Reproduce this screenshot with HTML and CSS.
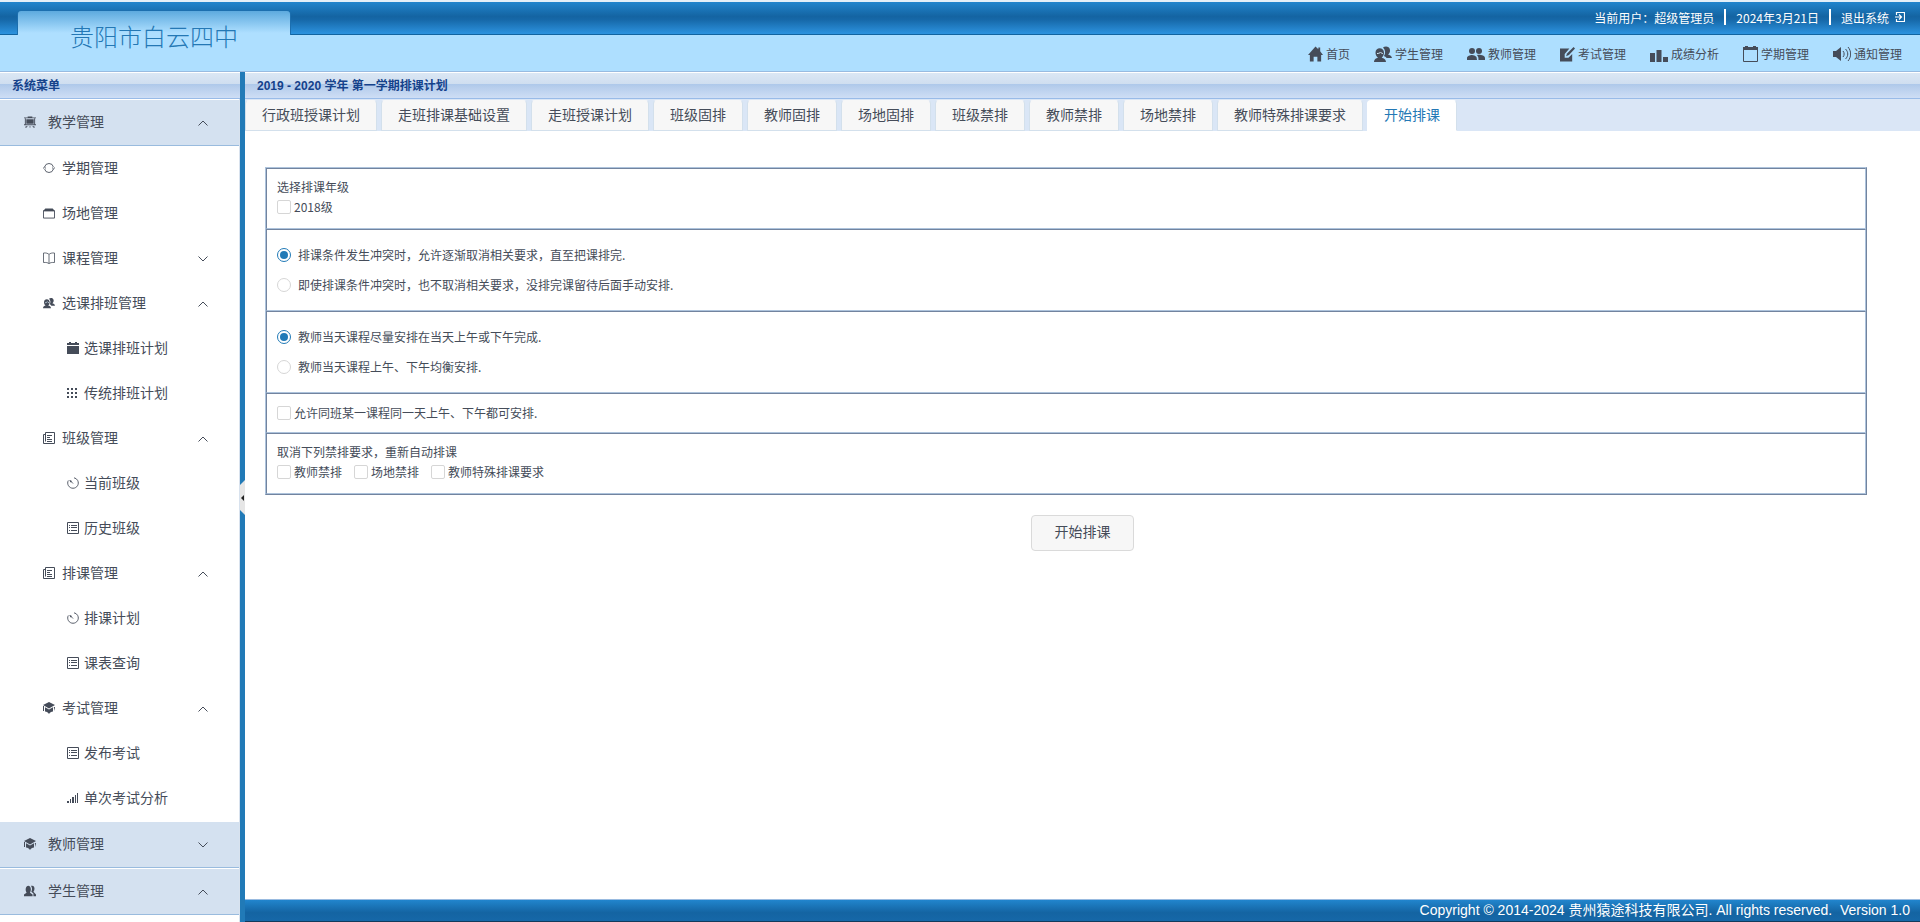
FILE: index.html
```html
<!DOCTYPE html>
<html lang="zh-CN">
<head>
<meta charset="utf-8">
<title>贵阳市白云四中</title>
<link rel="stylesheet" href="styles.css">
</head>
<body>
<svg class="sprite" aria-hidden="true">
  <symbol id="board" viewBox="0 0 13 12"><path d="M0 1h4V0h5v1h4v1H0zM2.500 3h8v5h-8zM0 8.500h13v1H0zM2 10.500h2L3 12H1zM6 10.500h1V12H6zM9 10.500h2l1 1.500h-2z"/><path d="M1.500 2v7M11.500 2v7" fill="none" stroke="currentColor"/></symbol>
  <symbol id="cycle" viewBox="0 0 14 14"><g fill="none" stroke="currentColor"><path d="M1.800 6a5.300 5.300 0 0 1 10.400 0M12.200 8a5.300 5.300 0 0 1-10.400 0M0 7.500l1.800-1.500 1.700 1.500M10.500 6.500L12.200 8 14 6.500"/></g></symbol>
  <symbol id="site" viewBox="0 0 13 12"><path d="M2.500 1h8L13 4H0z"/><path d="M.5 3.500h12v8H.5z" fill="none" stroke="currentColor"/></symbol>
  <symbol id="book" viewBox="0 0 12 12"><path d="M6 2.500C5 1.200 3 .8.500 1v9.500c2.500-.2 4.500.1 5.500 1.200 1-1.100 3-1.400 5.500-1.200V1C9 .8 7 1.200 6 2.500zM6 2.500v9" fill="none" stroke="currentColor" stroke-width=".8"/></symbol>
  <symbol id="friends" viewBox="0 0 18 16"><path d="M9 1.500C11 0 15.500 0 16 4c.2 2-.8 3.500-2 4.500 1.500.8 3.500 1 4 3.500h-5.500c-.5-1-1.500-1.500-2.500-2 1.800-2.500 1.500-6-1-8.500z"/><path d="M0 16c.2-3 2-3.500 4-4.200C2.500 10.500 1.500 9 1.500 6.800 1.500 4 3.300 2.300 5.700 2.300S10 4 10 6.800c0 2.200-1 3.700-2.300 5 2 .7 4.100 1.200 4.300 4.200z"/><path class="cut" d="M3 7.500c2 0 3-.5 3.500-1.500C7 7 8 7.500 9 7.500"/></symbol>
  <symbol id="date" viewBox="0 0 12 12"><path d="M0 1h2V0h2v1h4V0h2v1h2v2H0zM0 4h12v8H0z"/></symbol>
  <symbol id="grid" viewBox="0 0 12 12"><path d="M0 1h2v2H0zM4 1h2v2H4zM8 1h2v2H8zM0 5h2v2H0zM4 5h2v2H4zM8 5h2v2H8zM0 9h2v2H0zM4 9h2v2H4zM8 9h2v2H8z"/></symbol>
  <symbol id="sheet" viewBox="0 0 12 12"><path d="M2.500.5h9M11.500.5v11M.5 11.500h11M.5 2.500v9M2.500.5v9M.5 2.500h2M4 3.500h5M4 5.500h3M4 7.500h5M4 9.500h5" fill="none" stroke="currentColor"/></symbol>
  <symbol id="list" viewBox="0 0 12 12"><path d="M.5.5h11v11H.5zM2 3.500h1M4 3.500h6M2 5.500h1M4 5.500h6M2 8.500h1M4 8.500h6" fill="none" stroke="currentColor"/></symbol>
  <symbol id="gauge" viewBox="0 0 12 12"><path d="M1.300 3.500A5.300 5.300 0 1 0 10.700 3.500M10.700 3.500A5.300 5.300 0 0 0 7 .8M3 3.500l3 3" fill="none" stroke="currentColor" stroke-width=".9"/><path d="M2.500 3l2.500 1-1.500 1.500z"/></symbol>
  <symbol id="cap" viewBox="0 0 12 12"><path d="M0 3l6-3 6 3-6 3.500zM2 5.200L6 7.500l4-2.300V9.500C8.300 9.500 6.800 10.500 6 12c-.8-1.500-2.300-2.500-4-2.500zM0 4h1v5H0zM10.800 5H12l-.6 4z"/></symbol>
  <symbol id="signal" viewBox="0 0 12 12"><path d="M0 9h2v2H0zM3 7h1v4H3zM5 5h2v6H5zM8 3h1v8H8zM10 1h1v10h-1z"/></symbol>
  <symbol id="people" viewBox="0 0 14 14"><path d="M0 13v-2l3-2C1 6 2 1 5 1s4 5 2 8l3 2v2z"/><path d="M8 1c3-1 5 1 4 5l-1 2 3 3v2h-3v-3L8.500 8C10 5 9.500 3 8 1z"/></symbol>
  <symbol id="home" viewBox="0 0 16 16"><path d="M8 0l3 3V1h2v4l3 4h-2v7h-4v-5H6v5H2V9H0z"/></symbol>
  <symbol id="group" viewBox="0 0 18 16"><circle cx="5" cy="5" r="3"/><circle cx="12" cy="5" r="3"/><path d="M0 14v-2c0-2 3-3 5-3 1.500 0 3.500.7 4.500 2L10 14zM10 9c3-.6 8 .4 8 3v2h-6.500c0-2-.2-3.500-1.500-5z"/></symbol>
  <symbol id="edit" viewBox="0 0 16 16"><path d="M0 2h10L5 8v4h4l4-4v8H0z"/><path d="M6.500 10.500l1-3L14.500.5 16 2 9.500 9z"/></symbol>
  <symbol id="bars" viewBox="0 0 18 16"><path d="M0 7h5v9H0zM6.500 4h5v12h-5zM13 11h5v5h-5z"/></symbol>
  <symbol id="calendar" viewBox="0 0 15 16"><path d="M0 1h2V0h3v1h5V0h3v1h2v3H0z"/><path d="M.5 3v12.500h14V3" fill="none" stroke="currentColor"/></symbol>
  <symbol id="sound" viewBox="0 0 18 16"><path d="M0 5h3l5-4v14l-5-4H0z"/><path d="M10 5c1.500 1.500 1.500 4.500 0 6M12.500 3c3 3 3 7 0 10M15 1c3.500 4 3.500 10 0 14" fill="none" stroke="currentColor"/></symbol>
  <symbol id="exit" viewBox="0 0 10 10"><path d="M1.500 3V.5h8v9h-8V7M0 5h6M4 2.500L6.500 5 4 7.500" fill="none" stroke="currentColor" stroke-width="1.200"/></symbol>
  <symbol id="up" viewBox="0 0 10 6"><path d="M.5 5.500L5 1l4.500 4.500" fill="none" stroke="currentColor"/></symbol>
  <symbol id="down" viewBox="0 0 10 6"><path d="M.5.5L5 5 9.500.5" fill="none" stroke="currentColor"/></symbol>
</svg>

<div class="app">
  <header class="header">
    <div class="topbar">
      <span>当前用户：超级管理员</span>
      <span class="split"></span>
      <span>2024年3月21日</span>
      <span class="split"></span>
      <a class="logout" href="#">退出系统 <svg class="exit"><use href="#exit"/></svg></a>
    </div>
    <nav class="mainnav">
      <a href="#"><svg class="small"><use href="#home"/></svg>首页</a>
      <a href="#"><svg><use href="#friends"/></svg>学生管理</a>
      <a href="#"><svg><use href="#group"/></svg>教师管理</a>
      <a href="#"><svg class="small"><use href="#edit"/></svg>考试管理</a>
      <a href="#"><svg><use href="#bars"/></svg>成绩分析</a>
      <a href="#"><svg class="small"><use href="#calendar"/></svg>学期管理</a>
      <a href="#"><svg><use href="#sound"/></svg>通知管理</a>
    </nav>
    <h1 class="brand">贵阳市白云四中</h1>
  </header>

  <div class="body">
    <aside class="sidebar">
      <h2 class="bar">系统菜单</h2>
      <nav class="menu">
        <a class="top" href="#"><svg><use href="#board"/></svg>教学管理<svg class="arrow"><use href="#up"/></svg></a>
        <a class="sub" href="#"><svg><use href="#cycle"/></svg>学期管理</a>
        <a class="sub" href="#"><svg><use href="#site"/></svg>场地管理</a>
        <a class="sub" href="#"><svg><use href="#book"/></svg>课程管理<svg class="arrow"><use href="#down"/></svg></a>
        <a class="sub" href="#"><svg><use href="#friends"/></svg>选课排班管理<svg class="arrow"><use href="#up"/></svg></a>
        <a class="leaf" href="#"><svg><use href="#date"/></svg>选课排班计划</a>
        <a class="leaf" href="#"><svg><use href="#grid"/></svg>传统排班计划</a>
        <a class="sub" href="#"><svg><use href="#sheet"/></svg>班级管理<svg class="arrow"><use href="#up"/></svg></a>
        <a class="leaf" href="#"><svg><use href="#gauge"/></svg>当前班级</a>
        <a class="leaf" href="#"><svg><use href="#list"/></svg>历史班级</a>
        <a class="sub" href="#"><svg><use href="#sheet"/></svg>排课管理<svg class="arrow"><use href="#up"/></svg></a>
        <a class="leaf" href="#"><svg><use href="#gauge"/></svg>排课计划</a>
        <a class="leaf" href="#"><svg><use href="#list"/></svg>课表查询</a>
        <a class="sub" href="#"><svg><use href="#cap"/></svg>考试管理<svg class="arrow"><use href="#up"/></svg></a>
        <a class="leaf" href="#"><svg><use href="#list"/></svg>发布考试</a>
        <a class="leaf" href="#"><svg><use href="#signal"/></svg>单次考试分析</a>
        <a class="top" href="#"><svg><use href="#cap"/></svg>教师管理<svg class="arrow"><use href="#down"/></svg></a>
        <a class="top" href="#"><svg><use href="#people"/></svg>学生管理<svg class="arrow"><use href="#up"/></svg></a>
      </nav>
    </aside>
    <div class="splitter"><button class="handle" type="button" aria-label="收起菜单"></button></div>
    <main class="main">
      <h2 class="bar">2019 - 2020 学年 第一学期排课计划</h2>
      <nav class="tabs">
        <a href="#">行政班授课计划</a>
        <a href="#">走班排课基础设置</a>
        <a href="#">走班授课计划</a>
        <a href="#">班级固排</a>
        <a href="#">教师固排</a>
        <a href="#">场地固排</a>
        <a href="#">班级禁排</a>
        <a href="#">教师禁排</a>
        <a href="#">场地禁排</a>
        <a href="#">教师特殊排课要求</a>
        <a class="active" href="#">开始排课</a>
      </nav>
      <form class="content">
        <div class="options">
          <section class="titled">
            <p>选择排课年级</p>
            <div class="checks"><label><input type="checkbox">2018级</label></div>
          </section>
          <section class="radios">
            <label><input type="radio" name="conflict" checked>排课条件发生冲突时，允许逐渐取消相关要求，直至把课排完.</label>
            <label><input type="radio" name="conflict">即使排课条件冲突时，也不取消相关要求，没排完课留待后面手动安排.</label>
          </section>
          <section class="radios">
            <label><input type="radio" name="balance" checked>教师当天课程尽量安排在当天上午或下午完成.</label>
            <label><input type="radio" name="balance">教师当天课程上午、下午均衡安排.</label>
          </section>
          <section>
            <div class="checks"><label><input type="checkbox">允许同班某一课程同一天上午、下午都可安排.</label></div>
          </section>
          <section class="titled">
            <p>取消下列禁排要求，重新自动排课</p>
            <div class="checks">
              <label><input type="checkbox">教师禁排</label>
              <label><input type="checkbox">场地禁排</label>
              <label><input type="checkbox">教师特殊排课要求</label>
            </div>
          </section>
        </div>
        <button class="start" type="button">开始排课</button>
      </form>
      <footer class="footer">Copyright © 2014-2024 贵州猿途科技有限公司. All rights reserved. &nbsp;Version 1.0</footer>
    </main>
  </div>
</div>
</body>
</html>
```
FILE: styles.css
```css
* { box-sizing: border-box; }
body {
  margin: 0;
  font-family: "Noto Sans CJK SC", sans-serif;
  font-size: 12px;
  color: #454c59;
  background: #fff;
}
a { color: inherit; text-decoration: none; }
svg { fill: currentColor; flex: none; }
.sprite { display: none; }
.cut { fill: none; stroke: #d8ecf8; }
.app { display: flex; flex-direction: column; height: 100vh; overflow: hidden; }

.header {
  position: relative;
  flex: none;
  height: 72px;
  border-bottom: 1px solid #99bbe0;
  background: #aedfff;
}
.topbar {
  display: flex;
  align-items: center;
  justify-content: flex-end;
  height: 35px;
  padding: 0 15px 2px 0;
  border-top: 2px solid #e3eff8;
  border-bottom: 1px solid #1264a0;
  background: linear-gradient(#2185cd, #1464a2 45%, #1668a8 55%, #2d93df);
  color: #fff;
}
.split { width: 2px; height: 16px; margin: 0 10px; background: #fff; }
.logout { display: flex; align-items: center; gap: 6px; }
.exit { width: 10px; height: 10px; }
.mainnav {
  display: flex;
  align-items: center;
  justify-content: flex-end;
  gap: 24px;
  height: 37px;
  padding-right: 18px;
}
.mainnav a { display: flex; align-items: center; gap: 3px; }
.mainnav svg { width: 18px; height: 16px; }
.mainnav svg.small { width: 15px; }
.brand {
  position: absolute;
  left: 17px;
  top: 10px;
  width: 274px;
  height: 50px;
  margin: 0;
  padding-left: 52px;
  border: 1px solid #1c6faf;
  border-bottom: 0;
  border-radius: 4px 4px 0 0;
  background: linear-gradient(#5daade, #aedfff 22px);
  color: #2478b5;
  font-size: 24px;
  font-weight: 300;
  line-height: 50px;
  clip-path: polygon(0 0, 100% 0, 100% 25px, 273px 25px, 273px 100%, 1px 100%, 1px 25px, 0 25px);
}

.body { flex: 1; min-height: 0; display: flex; }
.bar {
  flex: none;
  height: 27px;
  margin: 0;
  padding-left: 12px;
  border-top: 1px solid #fff;
  border-bottom: 1px solid #99bbe8;
  background: linear-gradient(#dbe7f4, #cfdef0 11px, #adc8ea 11px, #b6cdec 14px, #cedef5);
  color: #15428b;
  font: bold 12px/26px "Liberation Sans", "Noto Sans CJK SC", sans-serif;
}
.sidebar { flex: none; width: 240px; display: flex; flex-direction: column; overflow: hidden; }
.menu { flex: 1; border-right: 1px solid #d8e2ee; }
.menu a {
  display: flex;
  align-items: center;
  height: 45px;
  padding-bottom: 3px;
  font-size: 14px;
}
.menu svg { width: 12px; height: 12px; margin-top: 1px; }
.menu .arrow { width: 10px; height: 6px; margin: 4px 31px 0 auto; }
.menu .top {
  height: 47px;
  padding-left: 24px;
  gap: 12px;
  border-top: 1px solid #fff;
  border-bottom: 1px solid #99bbde;
  background: #d4e1f0;
}
.menu .sub { padding-left: 43px; gap: 7px; }
.menu .leaf { padding-left: 67px; gap: 5px; }
.splitter { position: relative; flex: none; width: 5px; background: #217ab7; }
.handle {
  position: absolute;
  left: 0;
  top: 408px;
  width: 5px;
  height: 35px;
  padding: 0;
  border: 0;
  background: #e6e6e6;
  clip-path: polygon(0 5px, 5px 0, 5px 35px, 0 30px);
}
.handle::before {
  content: "";
  position: absolute;
  left: 1px;
  top: 15px;
  border: 3px solid transparent;
  border-left: 0;
  border-right: 3px solid #222;
}

.main { flex: 1; min-width: 0; display: flex; flex-direction: column; }
.tabs { flex: none; display: flex; gap: 4px; height: 32px; padding-top: 1px; background: #dae6f6; }
.tabs a {
  padding: 0 16px;
  border: 1px solid #d3e0ec;
  border-top-color: #f7f7f7;
  border-radius: 4px 4px 0 0;
  background: #f7f7f7;
  font-size: 14px;
  line-height: 27px;
  white-space: nowrap;
}
.tabs .active { border-color: #fff #d3e0ec #fff #fff; background: #fff; color: #2478b5; }
.content {
  flex: 1;
  display: flex;
  flex-direction: column;
  align-items: center;
  padding: 36px 53px 0 20px;
}
.options { width: 100%; border: 1px solid #adc3dc; border-right-color: #72849f; border-bottom-color: #72849f; }
.options section {
  padding: 9px 10px;
  border: 1px solid #72849f;
  border-right-color: #adc3dc;
  border-bottom-color: #adc3dc;
  line-height: 20px;
}
.options p { margin: 0; }
.options .titled { padding: 8px 10px 11px; }
.options .radios { padding: 10px; line-height: 30px; }
.radios label { display: flex; align-items: center; gap: 7px; }
.checks { display: flex; gap: 12px; }
.checks label { display: flex; align-items: center; gap: 3px; }
.options input {
  appearance: none;
  width: 14px;
  height: 14px;
  margin: 0;
  border: 1px solid #d6d6d6;
  border-radius: 2px;
  background: #fff;
}
.options input[type="radio"] { border-radius: 50%; }
.options input[type="radio"]:checked {
  padding: 2px;
  border-color: #217ab7;
  background: #217ab7 content-box;
}
.start {
  width: 103px;
  height: 36px;
  margin: 20px 0 0 33px;
  padding: 0 0 4px;
  border: 1px solid #dadada;
  border-radius: 4px;
  background: #f7f7f7;
  color: inherit;
  font: 14px "Noto Sans CJK SC", sans-serif;
}
.footer {
  flex: none;
  height: 23px;
  padding-right: 10px;
  border-top: 1px solid #99bbe0;
  border-bottom: 1px solid #123a5c;
  background: linear-gradient(#2185cd, #1464a2 60%, #1668a8);
  color: #fff;
  text-align: right;
  font: 14px/20px "Liberation Sans", "Noto Sans CJK SC", sans-serif;
}
```
